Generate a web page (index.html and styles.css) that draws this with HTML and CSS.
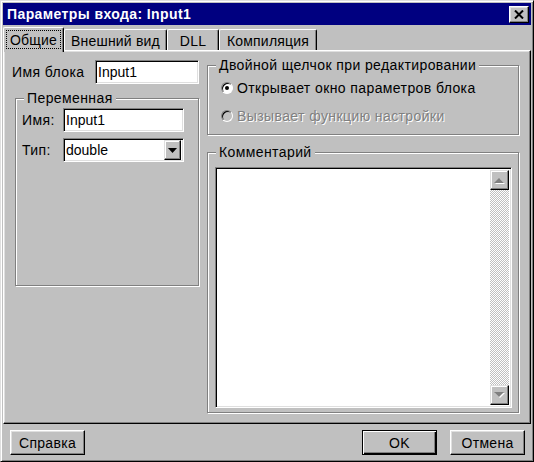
FILE: index.html
```html
<!DOCTYPE html>
<html>
<head>
<meta charset="utf-8">
<link rel="stylesheet" href="styles.css">
</head>
<body>
<div class="window">
  <div class="titlebar">
    <span class="title">Параметры входа: Input1</span>
    <span class="close-btn"><svg width="10" height="9" viewBox="0 0 10 9"><path d="M1 0.5 L9 8.5 M9 0.5 L1 8.5" stroke="#000" stroke-width="2"/></svg></span>
  </div>
  <div class="tabs">
    <div class="tab active t1"><span class="focus">Общие</span></div>
    <div class="tab t2">Внешний вид</div>
    <div class="tab t3">DLL</div>
    <div class="tab t4">Компиляция</div>
  </div>
  <div class="panel">
    <div class="col-left">
      <div class="row row-name">
        <span class="lbl lbl-name">Имя блока</span>
        <div class="edit edit-name">Input1</div>
      </div>
      <div class="group group-var">
        <span class="group-title">Переменная</span>
        <div class="row">
          <span class="lbl lbl-var">Имя:</span>
          <div class="edit edit-var">Input1</div>
        </div>
        <div class="row row-type">
          <span class="lbl lbl-var">Тип:</span>
          <div class="edit combo">
            <span class="combo-text">double</span>
            <span class="combo-btn"><svg width="9" height="5" viewBox="0 0 9 5"><path d="M0 0 H9 L4.5 5 Z" fill="#000"/></svg></span>
          </div>
        </div>
      </div>
    </div>
    <div class="col-right">
      <div class="group group-dbl">
        <span class="group-title">Двойной щелчок при редактировании</span>
        <div class="radio-row">
          <span class="radio checked"></span>
          <span>Открывает окно параметров блока</span>
        </div>
        <div class="radio-row disabled">
          <span class="radio"></span>
          <span class="dis-text">Вызывает функцию настройки</span>
        </div>
      </div>
      <div class="group group-comment">
        <span class="group-title">Комментарий</span>
        <div class="memo">
          <div class="memo-text"></div>
          <div class="vscroll">
            <span class="sbtn"><svg width="11" height="7" viewBox="0 0 11 7"><path d="M1 7 H11 L6 2 Z" fill="#fff"/><path d="M0 6 H10 L5 1 Z" fill="#808080"/></svg></span>
            <span class="track"></span>
            <span class="sbtn"><svg width="11" height="7" viewBox="0 0 11 7"><path d="M1 1 H11 L6 6 Z" fill="#fff"/><path d="M0 0 H10 L5 5 Z" fill="#808080"/></svg></span>
          </div>
        </div>
      </div>
    </div>
  </div>
  <div class="footer">
    <span class="btn">Справка</span>
    <span class="spacer"></span>
    <span class="btn default">OK</span>
    <span class="btn">Отмена</span>
  </div>
</div>
</body>
</html>
```

FILE: styles.css
```css
* { box-sizing: border-box; }
html, body { margin: 0; padding: 0; }
body {
  background: #c0c0c0;
  font-family: "Liberation Sans", Arial, sans-serif;
  font-size: 14px;
  color: #000;
}
.window {
  width: 534px;
  height: 462px;
  border: 1px solid;
  border-color: #dfdfdf #000 #000 #dfdfdf;
  box-shadow: inset 1px 1px #fff, inset -1px -1px #808080;
  padding: 2px;
  display: flex;
  flex-direction: column;
  background: #c0c0c0;
}
.titlebar {
  height: 22px;
  background: #000080;
  color: #fff;
  display: flex;
  align-items: center;
  justify-content: space-between;
  padding: 0 2px 0 4px;
}
.title {
  font-weight: bold;
  font-size: 14px;
  letter-spacing: 0.4px;
}
.close-btn {
  width: 20px;
  height: 17px;
  background: #c0c0c0;
  border: 1px solid;
  border-color: #fff #000 #000 #fff;
  box-shadow: inset -1px -1px #808080, inset 1px 1px #dfdfdf;
  display: flex;
  align-items: center;
  justify-content: center;
}
.tabs {
  margin-top: 2px;
  height: 23px;
  display: flex;
  align-items: flex-end;
  position: relative;
  z-index: 1;
}
.tab {
  height: 21px;
  border: 1px solid;
  border-bottom: none;
  border-color: #fff #000 #000 #fff;
  border-radius: 2px 2px 0 0;
  box-shadow: inset -1px 0 #808080;
  display: flex;
  align-items: center;
  justify-content: center;
  padding-top: 1px;
  letter-spacing: 0.2px;
}
.tab.active {
  height: 25px;
  margin-bottom: -2px;
  background: #c0c0c0;
  padding: 2px 2px 3px 2px;
}
.focus {
  display: flex;
  align-items: center;
  justify-content: center;
  width: 100%;
  height: 100%;
  outline: 1px dotted #000;
  outline-offset: -1px;
}
.t1 { width: 61px; }
.t2 { width: 103px; }
.t3 { width: 52px; }
.t4 { width: 98px; }
.panel {
  height: 374px;
  border: 1px solid;
  border-color: #fff #000 #000 #fff;
  box-shadow: inset -1px -1px #808080, inset 1px 1px #dfdfdf;
  display: flex;
  padding: 0 0 0 8px;
  letter-spacing: 0.4px;
}
.col-left {
  width: 195px;
  display: flex;
  flex-direction: column;
}
.row {
  display: flex;
  align-items: center;
}
.row-name { margin-top: 9px; }
.lbl-name { width: 83px; }
.lbl-var { width: 41px; }
.edit {
  height: 24px;
  background: #fff;
  border: 1px solid;
  border-color: #808080 #fff #fff #808080;
  box-shadow: inset 1px 1px #000, inset -1px -1px #dfdfdf;
  display: flex;
  align-items: center;
  padding: 0 2px 0 2px;
  letter-spacing: 0;
}
.edit-name { width: 104px; }
.edit-var { width: 121px; }
.group {
  position: relative;
  border: 1px solid #808080;
  box-shadow: inset 1px 1px #fff, 1px 1px 0 #fff;
}
.group-title {
  position: absolute;
  top: -9px;
  left: 8px;
  padding: 0 3px;
  background: #c0c0c0;
  line-height: 16px;
}
.group-var {
  margin: 14px 0 0 3px;
  width: 184px;
  height: 188px;
  padding: 9px 0 0 6px;
}
.row-type { margin-top: 6px; }
.combo {
  width: 121px;
  padding: 2px 2px 2px 2px;
  justify-content: space-between;
}
.combo-btn {
  width: 17px;
  height: 20px;
  background: #c0c0c0;
  border: 1px solid;
  border-color: #dfdfdf #000 #000 #dfdfdf;
  box-shadow: inset -1px -1px #808080, inset 1px 1px #fff;
  display: flex;
  align-items: center;
  justify-content: center;
}
.col-right {
  width: 312px;
  display: flex;
  flex-direction: column;
}
.group-dbl {
  margin-top: 14px;
  height: 70px;
  padding: 15px 0 0 13px;
}
.radio-row {
  display: flex;
  align-items: center;
  height: 14px;
  gap: 4px;
}
.radio-row + .radio-row { margin-top: 14px; }
.radio {
  width: 12px;
  height: 12px;
  border-radius: 50%;
  border: 1px solid;
  border-color: #808080 #fff #fff #808080;
  box-shadow: inset 1px 1px #000;
  background: #fff;
  position: relative;
}
.radio.checked::after {
  content: "";
  position: absolute;
  left: 3px;
  top: 3px;
  width: 4px;
  height: 4px;
  border-radius: 50%;
  background: #000;
}
.disabled .radio { background: #c0c0c0; }
.dis-text {
  color: #808080;
  text-shadow: 1px 1px 0 #fff;
}
.group-comment {
  margin-top: 17px;
  height: 261px;
  padding: 14px 0 0 7px;
}
.memo {
  width: 297px;
  height: 241px;
  background: #fff;
  border: 1px solid;
  border-color: #808080 #fff #fff #808080;
  box-shadow: inset 1px 1px #000, inset -1px -1px #dfdfdf;
  display: flex;
  padding: 2px 2px 2px 2px;
}
.memo-text { flex: 1; }
.vscroll {
  width: 19px;
  display: flex;
  flex-direction: column;
}
.sbtn {
  height: 20px;
  background: #c0c0c0;
  border: 1px solid;
  border-color: #dfdfdf #000 #000 #dfdfdf;
  box-shadow: inset -1px -1px #808080, inset 1px 1px #fff;
  display: flex;
  align-items: center;
  justify-content: center;
}
.track {
  flex: 1;
  background: repeating-conic-gradient(#c0c0c0 0 25%, #fff 0 50%) 0 0 / 2px 2px;
}
.footer {
  display: flex;
  padding: 6px 6px 0 7px;
  gap: 13px;
  letter-spacing: 0.3px;
}
.spacer { flex: 1; }
.btn {
  width: 75px;
  height: 25px;
  border: 1px solid;
  border-color: #fff #000 #000 #fff;
  box-shadow: inset -1px -1px #808080, inset 1px 1px #dfdfdf;
  display: flex;
  align-items: center;
  justify-content: center;
}
.btn.default {
  border-color: #000;
  box-shadow: inset 1px 1px #fff, inset -1px -1px #000, inset -2px -2px #808080;
}
```
